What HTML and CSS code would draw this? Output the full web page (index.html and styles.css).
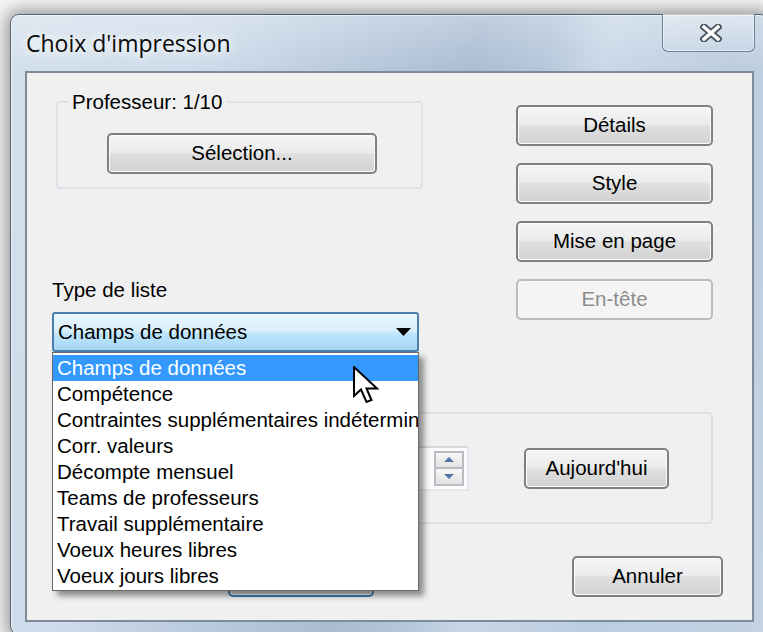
FILE: index.html
```html
<!DOCTYPE html>
<html lang="fr">
<head>
<meta charset="utf-8">
<title>Choix d'impression</title>
<link rel="stylesheet" href="styles.css">
</head>
<body>
<div class="window">
  <div class="titlebar">
    <span class="title">Choix d'impression</span>
    <button class="close" aria-label="Fermer">
      <svg width="22" height="18" viewBox="0 0 22 18">
        <path d="M4 3 L18 15 M18 3 L4 15" stroke="#4a5560" stroke-width="7" stroke-linecap="square"/>
        <path d="M4 3 L18 15 M18 3 L4 15" stroke="#fdfdfd" stroke-width="3.4" stroke-linecap="square"/>
      </svg>
    </button>
  </div>

  <div class="client">
    <div class="top">
      <div class="left">
        <fieldset class="group teacher">
          <legend>Professeur: 1/10</legend>
          <button class="btn select">Sélection...</button>
        </fieldset>
        <div class="field-label">Type de liste</div>
        <div class="combo">
          <span>Champs de données</span>
          <svg width="15" height="8" viewBox="0 0 15 8"><path d="M0 0 H15 L7.5 8 Z" fill="#000"/></svg>
        </div>
      </div>
      <div class="actions">
        <button class="btn">Détails</button>
        <button class="btn">Style</button>
        <button class="btn">Mise en page</button>
        <button class="btn" disabled>En-tête</button>
      </div>
    </div>

    <div class="group period">
      <div class="datebox">
        <div class="spin">
          <span class="spin-btn"><svg width="10" height="5" viewBox="0 0 10 5"><path d="M0 5 L5 0 L10 5 Z" fill="#4f78a8"/></svg></span>
          <span class="spin-btn"><svg width="10" height="5" viewBox="0 0 10 5"><path d="M0 0 L10 0 L5 5 Z" fill="#4f78a8"/></svg></span>
        </div>
      </div>
      <button class="btn today">Aujourd'hui</button>
    </div>

    <div class="footer">
      <button class="btn default">OK</button>
      <button class="btn cancel">Annuler</button>
    </div>

    <ul class="dropdown">
      <li class="active">Champs de données</li>
      <li>Compétence</li>
      <li>Contraintes supplémentaires indéterminées</li>
      <li>Corr. valeurs</li>
      <li>Décompte mensuel</li>
      <li>Teams de professeurs</li>
      <li>Travail supplémentaire</li>
      <li>Voeux heures libres</li>
      <li>Voeux jours libres</li>
    </ul>

    <svg class="pointer" width="26" height="40" viewBox="0 0 26 40">
      <path d="M1 1 V30 L8 23.5 L13.5 36 L18.5 34 L13.5 22.5 H24 Z" fill="#fff" stroke="#000" stroke-width="2" stroke-linejoin="miter"/>
    </svg>
  </div>
</div>
</body>
</html>
```

FILE: styles.css
```css
html, body {
  margin: 0;
  padding: 0;
}

body {
  width: 763px;
  height: 632px;
  overflow: hidden;
  background: #f4f4f4;
  font-family: "Liberation Sans", Arial, sans-serif;
  font-size: 20.5px;
  color: #000;
}

/* window frame (glass) */
.window {
  box-sizing: border-box;
  margin: 14px 0 0 10px;
  width: 759px;
  height: 621px;
  padding: 0 14px 13px 14px;
  display: flex;
  flex-direction: column;
  border: 1px solid rgba(45, 60, 80, 0.75);
  border-radius: 9px;
  background:
    linear-gradient(180deg, rgba(255, 255, 255, 0.28) 0, rgba(255, 255, 255, 0) 57px),
    linear-gradient(104deg, #d3e0ec 0%, #cddbea 22%, #b9cadd 38%, #a9bcd2 52%, #b4c6da 60%, #c8d7e7 66%, #bccde0 80%, #c3d3e4 100%);
  box-shadow: 0 0 16px 4px rgba(0, 0, 0, 0.38), inset 0 0 0 1px rgba(255, 255, 255, 0.55);
}

.titlebar {
  height: 56px;
  flex: none;
  display: flex;
  justify-content: space-between;
  align-items: flex-start;
}

.title {
  margin: 13px 0 0 1px;
  font-family: "Open Sans", "Liberation Sans", sans-serif;
  font-size: 23px;
  line-height: 30px;
  color: #0a0a0a;
  text-shadow: 0 0 8px #fff, 0 0 14px rgba(255, 255, 255, 0.9), 0 0 20px rgba(255, 255, 255, 0.7);
}

.close {
  box-sizing: border-box;
  width: 93px;
  height: 38px;
  margin: -1px -1px 0 0;
  padding: 0;
  display: flex;
  align-items: center;
  justify-content: center;
  border: 1px solid #6f7e8e;
  border-top: none;
  border-radius: 0 0 6px 6px;
  background: linear-gradient(180deg, rgba(255, 255, 255, 0.32), rgba(255, 255, 255, 0.08));
  box-shadow: inset 0 0 0 1px rgba(255, 255, 255, 0.5);
}

.close svg {
  margin: 0 0 0 4px;
}

/* dialog client area */
.client {
  position: relative;
  box-sizing: border-box;
  height: 551px;
  flex: none;
  padding: 18px 39px 0 25px;
  background: #f0f0f0;
  border: 2px solid #7f8b97;
}

.top {
  display: flex;
  justify-content: space-between;
  align-items: flex-start;
}

.left {
  width: 371px;
  flex: none;
}

.group {
  box-sizing: border-box;
  border: 2px solid #dbe3e9;
  border-radius: 4px;
}

.teacher {
  width: 367px;
  margin: 0 0 0 4px;
  padding: 0 0 13px 0;
}

.teacher legend {
  margin-left: 10px;
  padding: 0 4px;
  line-height: 22px;
}

.btn {
  box-sizing: border-box;
  flex: none;
  height: 41px;
  padding: 0;
  border: 2px solid #808080;
  border-radius: 5px;
  background: linear-gradient(180deg, #f5f5f5 0%, #ececec 46%, #dfdfdf 52%, #d2d2d2 100%);
  box-shadow: inset 0 0 0 1px #fbfbfb;
  font: inherit;
  color: #000;
  line-height: 1;
}

.btn:disabled {
  border-color: #b9bdc0;
  background: #f4f4f4;
  box-shadow: none;
  color: #8c8c8c;
}

.select {
  display: block;
  width: 270px;
  margin: 20px 0 0 49px;
}

.field-label {
  margin: 88px 0 0 0;
  line-height: 26px;
}

.combo {
  box-sizing: border-box;
  width: 367px;
  height: 40px;
  margin-top: 9px;
  padding: 0 6px 0 4px;
  display: flex;
  align-items: center;
  justify-content: space-between;
  border: 2px solid #4b80ad;
  border-radius: 3px;
  background: linear-gradient(180deg, #eaf6fd 0%, #d9f0fc 46%, #bee6fd 54%, #a5d6f2 100%);
}

.actions {
  margin-top: 14px;
  flex: none;
  display: flex;
  flex-direction: column;
  gap: 17px;
}

.actions .btn {
  width: 197px;
}

/* second group: date field */
.period {
  width: 657px;
  height: 112px;
  margin: 60px 0 0 4px;
  display: flex;
  align-items: center;
}

.datebox {
  box-sizing: border-box;
  flex: none;
  width: 212px;
  height: 45px;
  margin-left: 199px;
  padding-right: 3px;
  display: flex;
  align-items: center;
  justify-content: flex-end;
  background: #fafbfc;
  border: 2px solid #e2e8ee;
  border-top-color: #d2d8de;
}

.spin {
  display: flex;
  flex-direction: column;
  width: 30px;
}

.spin-btn {
  box-sizing: border-box;
  height: 18px;
  display: flex;
  align-items: center;
  justify-content: center;
  border: 2px solid #b9bdc2;
  background: linear-gradient(180deg, #f7f7f7, #e3e3e3);
}

.spin-btn + .spin-btn {
  height: 17px;
  border-top: none;
}

.today {
  width: 145px;
  margin-left: 55px;
}

.footer {
  margin-top: 32px;
  display: flex;
}

.default {
  width: 146px;
  margin-left: 176px;
  border-color: #3c7fb1;
}

.cancel {
  width: 151px;
  margin-left: 198px;
}

/* open list of the combo box */
.dropdown {
  position: absolute;
  left: 25px;
  top: 279px;
  box-sizing: border-box;
  width: 367px;
  height: 239px;
  margin: 0;
  padding: 2px 0 0 0;
  list-style: none;
  background: #fff;
  border: 1px solid #6a6a6a;
  box-shadow: 5px 5px 6px rgba(0, 0, 0, 0.42);
}

.dropdown li {
  height: 26px;
  line-height: 26px;
  padding-left: 4px;
  white-space: nowrap;
  overflow: hidden;
}

.dropdown li.active {
  background: #3399ff;
  color: #fff;
}

.pointer {
  position: absolute;
  left: 326px;
  top: 293px;
}
```
